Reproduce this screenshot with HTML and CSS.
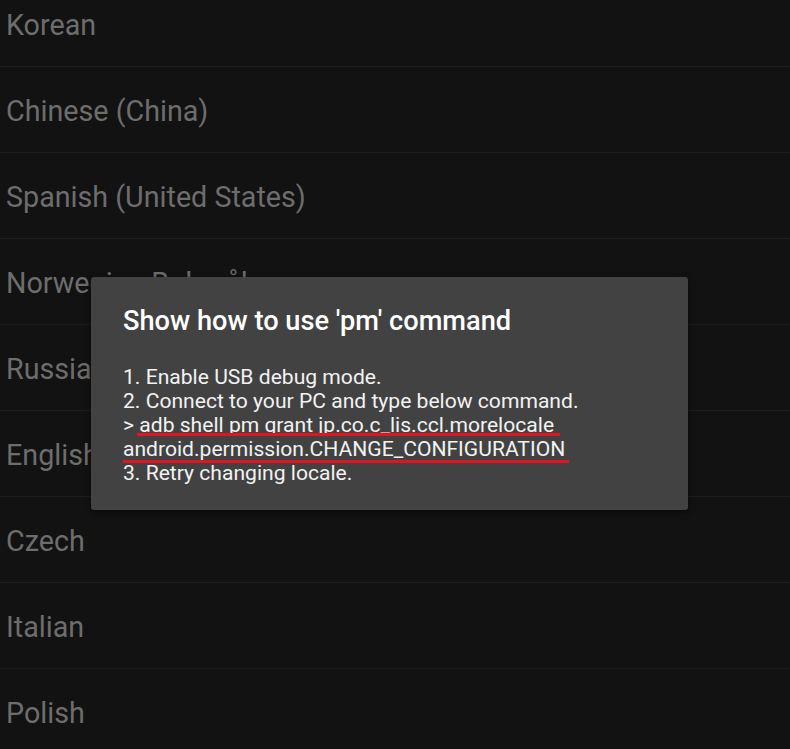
FILE: index.html
```html
<!DOCTYPE html>
<html lang="en">
<head>
    <meta charset="UTF-8">
    <meta name="viewport" content="width=device-width, initial-scale=1.0">
    <title>More Locale</title>
    <link rel="stylesheet" href="styles.css">
</head>
<body>
    <ul class="locales">
        <li>Korean</li>
        <li>Chinese (China)</li>
        <li>Spanish (United States)</li>
        <li>Norwegian Bokmål</li>
        <li>Russian</li>
        <li>English</li>
        <li>Czech</li>
        <li>Italian</li>
        <li>Polish</li>
    </ul>

    <div class="dialog">
        <h2 class="dialog-title">Show how to use 'pm' command</h2>
        <p class="dialog-body">
            1. Enable USB debug mode.<br>
            2. Connect to your PC and type below command.<br>
            &gt; <span class="mark mark-one">adb shell pm grant jp.co.c_lis.ccl.morelocale</span><br>
            <span class="mark mark-two">android.permission.CHANGE_CONFIGURATION</span><br>
            3. Retry changing locale.
        </p>
    </div>
</body>
</html>
```

FILE: styles.css
```css
html, body {
    margin: 0;
    height: 100%;
    background-color: #121212;
    overflow: hidden;
    font-family: Roboto, "Noto Sans", sans-serif;
}
.locales {
    list-style: none;
    margin: -19px 0 0 0;
    padding: 0;
}
.locales li {
    height: 82px;
    line-height: 82px;
    padding: 3px 0 0 6px;
    border-bottom: 1px solid #1d1d1d;
    font-size: 28.7px;
    color: #6d6d6d;
    white-space: nowrap;
}
.dialog {
    position: absolute;
    left: 91px;
    top: 277px;
    width: 597px;
    height: 233px;
    box-sizing: border-box;
    padding: 28px 32px 0 32px;
    background-color: #424242;
    border-radius: 3px;
    box-shadow: 0 2px 6px rgba(0, 0, 0, 0.5);
    color: #f2f2f2;
}
.dialog-title {
    margin: 0;
    font-size: 27.2px;
    font-weight: 500;
    line-height: 32px;
    color: #ffffff;
}
.dialog-body {
    margin: 28px 0 0 0;
    font-size: 21.1px;
    line-height: 24px;
}
.mark {
    position: relative;
}
.mark::after {
    content: "";
    position: absolute;
    height: 3px;
    background-color: #e3141f;
}
.mark-one::after {
    left: -2px;
    right: -6px;
    bottom: 1px;
}
.mark-two::after {
    left: 0;
    right: -4px;
    bottom: -2px;
}
```
